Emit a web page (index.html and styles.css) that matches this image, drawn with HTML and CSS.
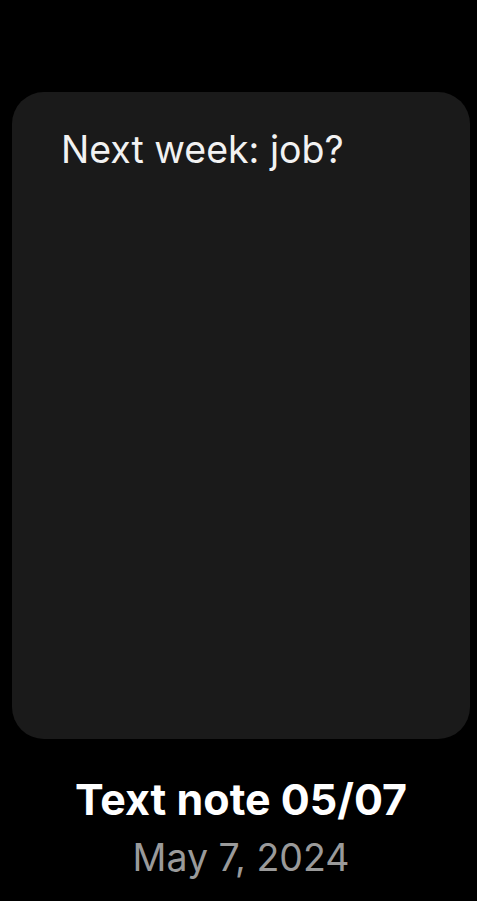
FILE: index.html
```html
<!DOCTYPE html>
<html>
<head>
<meta charset="utf-8">
<link rel="stylesheet" href="styles.css">
</head>
<body>
<main class="screen">
  <section class="card">
    <p class="note-text">Next week: job?</p>
  </section>
  <div class="caption">
    <h1 class="title">Text note 05/07</h1>
    <p class="date">May 7, 2024</p>
  </div>
</main>
</body>
</html>
```
FILE: styles.css
```css
html, body {
  margin: 0;
  padding: 0;
  background: #000;
}
.screen {
  width: 477px;
  height: 901px;
  box-sizing: border-box;
  padding: 92px 7px 0 12px;
  display: flex;
  flex-direction: column;
  font-family: Inter, "Noto Sans", sans-serif;
}
.card {
  height: 647px;
  background: #1a1a1a;
  border-radius: 32px;
  padding: 36px 0 0 49px;
  box-sizing: border-box;
}
.note-text {
  margin: 0;
  color: #f2f2f2;
  font-size: 37.5px;
  line-height: 44px;
  font-weight: 400;
}
.caption {
  display: flex;
  flex-direction: column;
  align-items: center;
  padding-top: 36px;
}
.title {
  margin: 0;
  color: #fff;
  font-size: 43px;
  line-height: 48px;
  font-weight: 700;
}
.date {
  margin: 13px 0 0;
  color: #9a9a9a;
  font-size: 37.5px;
  line-height: 44px;
  font-weight: 400;
}
```
